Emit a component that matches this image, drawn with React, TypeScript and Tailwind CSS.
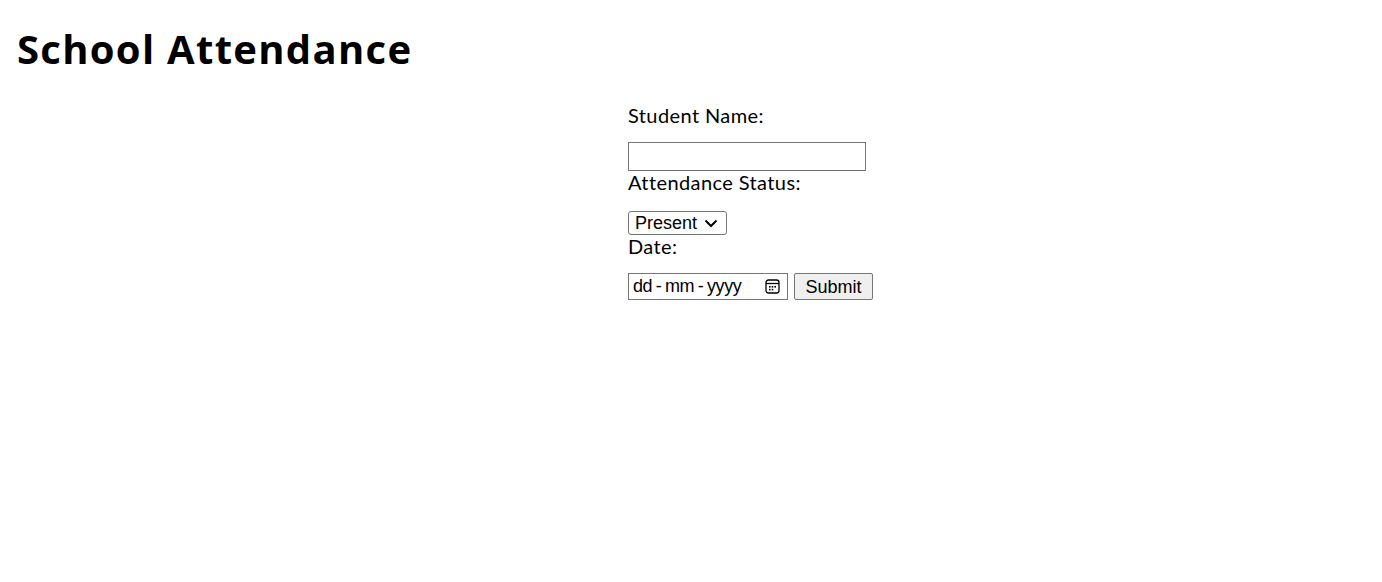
const controlFont = { fontFamily: "'Liberation Sans', Arial, sans-serif" };

export default function App() {
  return (
    <div className="min-h-screen bg-white text-black" style={{ fontFamily: "Lato, 'Noto Sans', sans-serif" }}>
      <h1
        className="pl-[17px] pt-[25px] text-[40px] font-bold leading-[48px] tracking-[1.3px]"
        style={{ fontFamily: "'Open Sans', Lato, sans-serif" }}
      >
        School Attendance
      </h1>

      <form className="ml-[628px] mt-[31px] flex flex-col items-start">
        <label htmlFor="studentName" className="block text-[20px] leading-[23px] tracking-[0.4px]">
          Student Name:
        </label>
        <input
          id="studentName"
          type="text"
          className="mt-[15px] h-[29px] w-[238px] border border-[#767676] bg-white px-[3px] text-[18px] outline-none"
          style={controlFont}
        />

        <label htmlFor="status" className="block text-[20px] leading-[23px] tracking-[0.4px]">
          Attendance Status:
        </label>
        <div className="relative mt-[17px]">
          <select
            id="status"
            className="h-[24px] w-[99px] appearance-none rounded-[3px] border border-[#767676] bg-white pl-[6px] text-[18px] leading-[20px]"
            style={controlFont}
          >
            <option>Present</option>
            <option>Absent</option>
          </select>
          <svg
            className="pointer-events-none absolute right-[9px] top-[8px]"
            width="14"
            height="9"
            viewBox="0 0 14 9"
            fill="none"
          >
            <path d="M1.5 1.5 7 7l5.5-5.5" stroke="#000" strokeWidth="2" />
          </svg>
        </div>

        <label htmlFor="date" className="block text-[20px] leading-[23px] tracking-[0.4px]">
          Date:
        </label>
        <div className="mt-[15px] flex items-center">
          <div className="flex h-[27px] w-[160px] items-center border border-[#767676] bg-white pl-[4px] pr-[7px]">
            <input
              id="date"
              type="text"
              placeholder="dd - mm - yyyy"
              className="w-full min-w-0 bg-transparent text-[18px] tracking-[-0.4px] outline-none [word-spacing:-1px] placeholder:text-black"
              style={controlFont}
            />
            <svg width="15" height="15" viewBox="0 0 15 15" fill="none" className="shrink-0">
              <rect x="1" y="1" width="13" height="13" rx="2.5" stroke="#000" strokeWidth="1.3" />
              <path d="M1 4.5h13" stroke="#000" strokeWidth="1.3" />
              <rect x="4" y="7" width="1.6" height="1.6" fill="#000" />
              <rect x="6.7" y="7" width="1.6" height="1.6" fill="#000" />
              <rect x="9.4" y="7" width="1.6" height="1.6" fill="#000" />
              <rect x="4" y="9.8" width="1.6" height="1.6" fill="#000" />
              <rect x="6.7" y="9.8" width="1.6" height="1.6" fill="#000" />
            </svg>
          </div>
          <button
            type="submit"
            className="ml-[6px] h-[27px] w-[79px] rounded-[2px] border border-[#767676] bg-[#efefef] text-[18px]"
            style={controlFont}
          >
            Submit
          </button>
        </div>
      </form>
    </div>
  );
}
